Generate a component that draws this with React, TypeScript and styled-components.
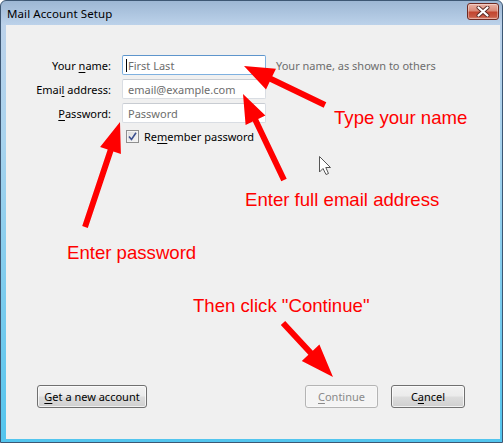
import React from "react";
import styled, { createGlobalStyle } from "styled-components";

const Global = createGlobalStyle`
  html, body { margin: 0; padding: 0; background: #ffffff; }
  body { font-family: "Noto Sans", "Open Sans", sans-serif; }
  * { box-sizing: border-box; }
`;

const UI_FONT = `"Noto Sans", "Open Sans", "DejaVu Sans", sans-serif`;

const Window = styled.div`
  position: relative;
  width: 503px;
  height: 443px;
  border: 1px solid #3d5774;
  border-radius: 6px 6px 0 0;
  background: linear-gradient(180deg, #9db7d4 0px, #bcd2ea 24px, #a8d3ee 140px, #52c5ee 100%);
  display: flex;
  flex-direction: column;
  padding: 0 2px 3px 5px;
  overflow: hidden;
  font-family: ${UI_FONT};
  font-size: 11px;
  color: #000;
`;

const TitleBar = styled.div`
  height: 24px;
  margin: 0 -2px 0 -5px;
  padding: 0 3px 0 6px;
  display: flex;
  align-items: center;
  justify-content: space-between;
`;

const Title = styled.span`
  font-size: 11.5px;
  color: #000;
  letter-spacing: 0.1px;
`;

const CloseButton = styled.div`
  width: 32px;
  height: 17px;
  margin-top: -3px;
  border: 1px solid #6e2a22;
  border-radius: 3px;
  background: linear-gradient(180deg, #eab3a6 0%, #d98a78 45%, #c2452f 55%, #c85a44 85%, #df8d78 100%);
  display: flex;
  align-items: center;
  justify-content: center;
  box-shadow: inset 0 0 0 1px rgba(255, 255, 255, 0.35);
`;

const Client = styled.div`
  flex: 1;
  background: #f0f0f0;
  display: flex;
  flex-direction: column;
  padding: 30px 35px 31px 0;
`;

const Form = styled.div`
  display: grid;
  grid-template-columns: 116px 154px 1fr;
  row-gap: 4px;
  align-items: center;
`;

const Label = styled.label`
  text-align: right;
  padding-right: 11px;
  white-space: nowrap;
`;

const Key = styled.span`
  text-decoration: underline;
  text-underline-offset: 2px;
`;

const Field = styled.div<{ $focused?: boolean }>`
  width: 144px;
  height: 20px;
  background: #ffffff;
  border: 1px solid ${(p) => (p.$focused ? "#7fb1e0" : "#d9dde3")};
  border-top-color: ${(p) => (p.$focused ? "#5d95cc" : "#c8ccd2")};
  border-radius: 2px;
  display: flex;
  align-items: center;
  padding-left: 5px;
  position: relative;
`;

const Placeholder = styled.span`
  color: #6d6d6d;
  white-space: nowrap;
`;

const Caret = styled.span`
  position: absolute;
  left: 3px;
  top: 3px;
  width: 1px;
  height: 13px;
  background: #000;
`;

const Hint = styled.span`
  color: #6d6d6d;
  white-space: nowrap;
`;

const CheckRow = styled.div`
  grid-column: 2 / 4;
  display: flex;
  align-items: center;
  gap: 5px;
  height: 19px;
  padding-left: 4px;
`;

const CheckBox = styled.span`
  width: 13px;
  height: 13px;
  border: 1px solid #8f8f8f;
  background: linear-gradient(135deg, #dcdcdc 0%, #f6f6f6 100%);
  display: flex;
  align-items: center;
  justify-content: center;
  box-shadow: inset 0 0 0 1px #f4f4f4;
`;

const Spacer = styled.div`
  flex: 1;
`;

const ButtonRow = styled.div`
  display: flex;
  align-items: center;
  gap: 13px;
  margin-left: 31px;
`;

const Button = styled.button<{ $width: number }>`
  width: ${(p) => p.$width}px;
  height: 23px;
  font-family: ${UI_FONT};
  font-size: 11px;
  color: ${(p) => (p.disabled ? "#8a8a8a" : "#000")};
  border: 1px solid ${(p) => (p.disabled ? "#b4b4b4" : "#707070")};
  border-radius: 3px;
  padding: 0;
  background: ${(p) =>
    p.disabled
      ? "#f4f4f4"
      : "linear-gradient(180deg, #f2f2f2 0%, #ebebeb 48%, #dddddd 52%, #cfcfcf 100%)"};
  box-shadow: inset 0 0 0 1px ${(p) => (p.disabled ? "#f8f8f8" : "rgba(255,255,255,0.7)")};
  display: flex;
  align-items: center;
  justify-content: center;
`;

const Grow = styled.div`
  flex: 1;
`;

const Overlay = styled.div`
  position: absolute;
  inset: 0;
  pointer-events: none;
`;

const Canvas = styled.svg`
  position: absolute;
  left: 0;
  top: 0;
`;

const Note = styled.div<{ $x: number; $y: number }>`
  position: absolute;
  left: ${(p) => p.$x}px;
  top: ${(p) => p.$y}px;
  font-family: "Liberation Sans", Arial, sans-serif;
  font-size: 18.6px;
  color: #ff0000;
  white-space: nowrap;
  line-height: normal;
`;

type Pt = [number, number];

function arrowPolys(tail: Pt, tip: Pt, L: number, W: number, s: number) {
  const dx = tip[0] - tail[0];
  const dy = tip[1] - tail[1];
  const len = Math.hypot(dx, dy);
  const ux = dx / len;
  const uy = dy / len;
  const nx = -uy;
  const ny = ux;
  const bx = tip[0] - ux * L;
  const by = tip[1] - uy * L;
  const pts: Pt[] = [
    [tail[0] + nx * s, tail[1] + ny * s],
    [bx + nx * s, by + ny * s],
    [bx + nx * W, by + ny * W],
    [tip[0], tip[1]],
    [bx - nx * W, by - ny * W],
    [bx - nx * s, by - ny * s],
    [tail[0] - nx * s, tail[1] - ny * s],
  ];
  return pts.map((p) => `${p[0].toFixed(1)},${p[1].toFixed(1)}`).join(" ");
}

const arrows: { tail: Pt; tip: Pt; L: number; W: number }[] = [
  { tail: [324, 104], tip: [243, 65], L: 30, W: 11.5 },
  { tail: [283, 179], tip: [242, 93], L: 29, W: 11 },
  { tail: [84, 226], tip: [119, 121], L: 30, W: 11 },
  { tail: [282, 322], tip: [332, 376], L: 33, W: 12 },
];

export default function App() {
  return (
    <>
      <Global />
      <Window>
        <TitleBar>
          <Title>Mail Account Setup</Title>
          <CloseButton>
            <svg width="14" height="11" viewBox="0 0 14 11">
              <path d="M2.5 1.5 L11.5 9.5 M11.5 1.5 L2.5 9.5" stroke="#5a2a24" strokeWidth="4" strokeLinecap="round" />
              <path d="M2.5 1.5 L11.5 9.5 M11.5 1.5 L2.5 9.5" stroke="#ffffff" strokeWidth="2.2" strokeLinecap="round" />
            </svg>
          </CloseButton>
        </TitleBar>
        <Client>
          <Form>
            <Label>
              Your <Key>n</Key>ame:
            </Label>
            <Field $focused>
              <Caret />
              <Placeholder>First Last</Placeholder>
            </Field>
            <Hint>Your name, as shown to others</Hint>

            <Label>
              Emai<Key>l</Key> address:
            </Label>
            <Field>
              <Placeholder>email@example.com</Placeholder>
            </Field>
            <span />

            <Label>
              <Key>P</Key>assword:
            </Label>
            <Field>
              <Placeholder>Password</Placeholder>
            </Field>
            <span />

            <span />
            <CheckRow>
              <CheckBox>
                <svg width="9" height="9" viewBox="0 0 9 9">
                  <path d="M1 4.5 L3.5 7.5 L8 0.8" stroke="#3d5190" strokeWidth="1.6" fill="none" />
                </svg>
              </CheckBox>
              <span>
                Re<Key>m</Key>ember password
              </span>
            </CheckRow>
          </Form>
          <Spacer />
          <ButtonRow>
            <Button $width={110}>
              <span>
                <Key>G</Key>et a new account
              </span>
            </Button>
            <Grow />
            <Button $width={73} disabled>
              <span>
                <Key>C</Key>ontinue
              </span>
            </Button>
            <Button $width={74}>
              <span>
                C<Key>a</Key>ncel
              </span>
            </Button>
          </ButtonRow>
        </Client>
        <Overlay>
          <Canvas width="503" height="443" viewBox="0 0 503 443">
            {arrows.map((a, i) => (
              <polygon key={i} points={arrowPolys(a.tail, a.tip, a.L, a.W, 3)} fill="#ff0000" />
            ))}
            <path
              d="M318.5 155.5 L318.5 171 L322 167.5 L325 173.5 L327.5 172.5 L324.8 166.5 L329.5 166.5 Z"
              fill="#ffffff"
              stroke="#555"
              strokeWidth="1"
            />
          </Canvas>
          <Note $x={333} $y={106}>Type your name</Note>
          <Note $x={244} $y={188}>Enter full email address</Note>
          <Note $x={66} $y={241}>Enter password</Note>
          <Note $x={192} $y={294}>Then click "Continue"</Note>
        </Overlay>
      </Window>
    </>
  );
}
